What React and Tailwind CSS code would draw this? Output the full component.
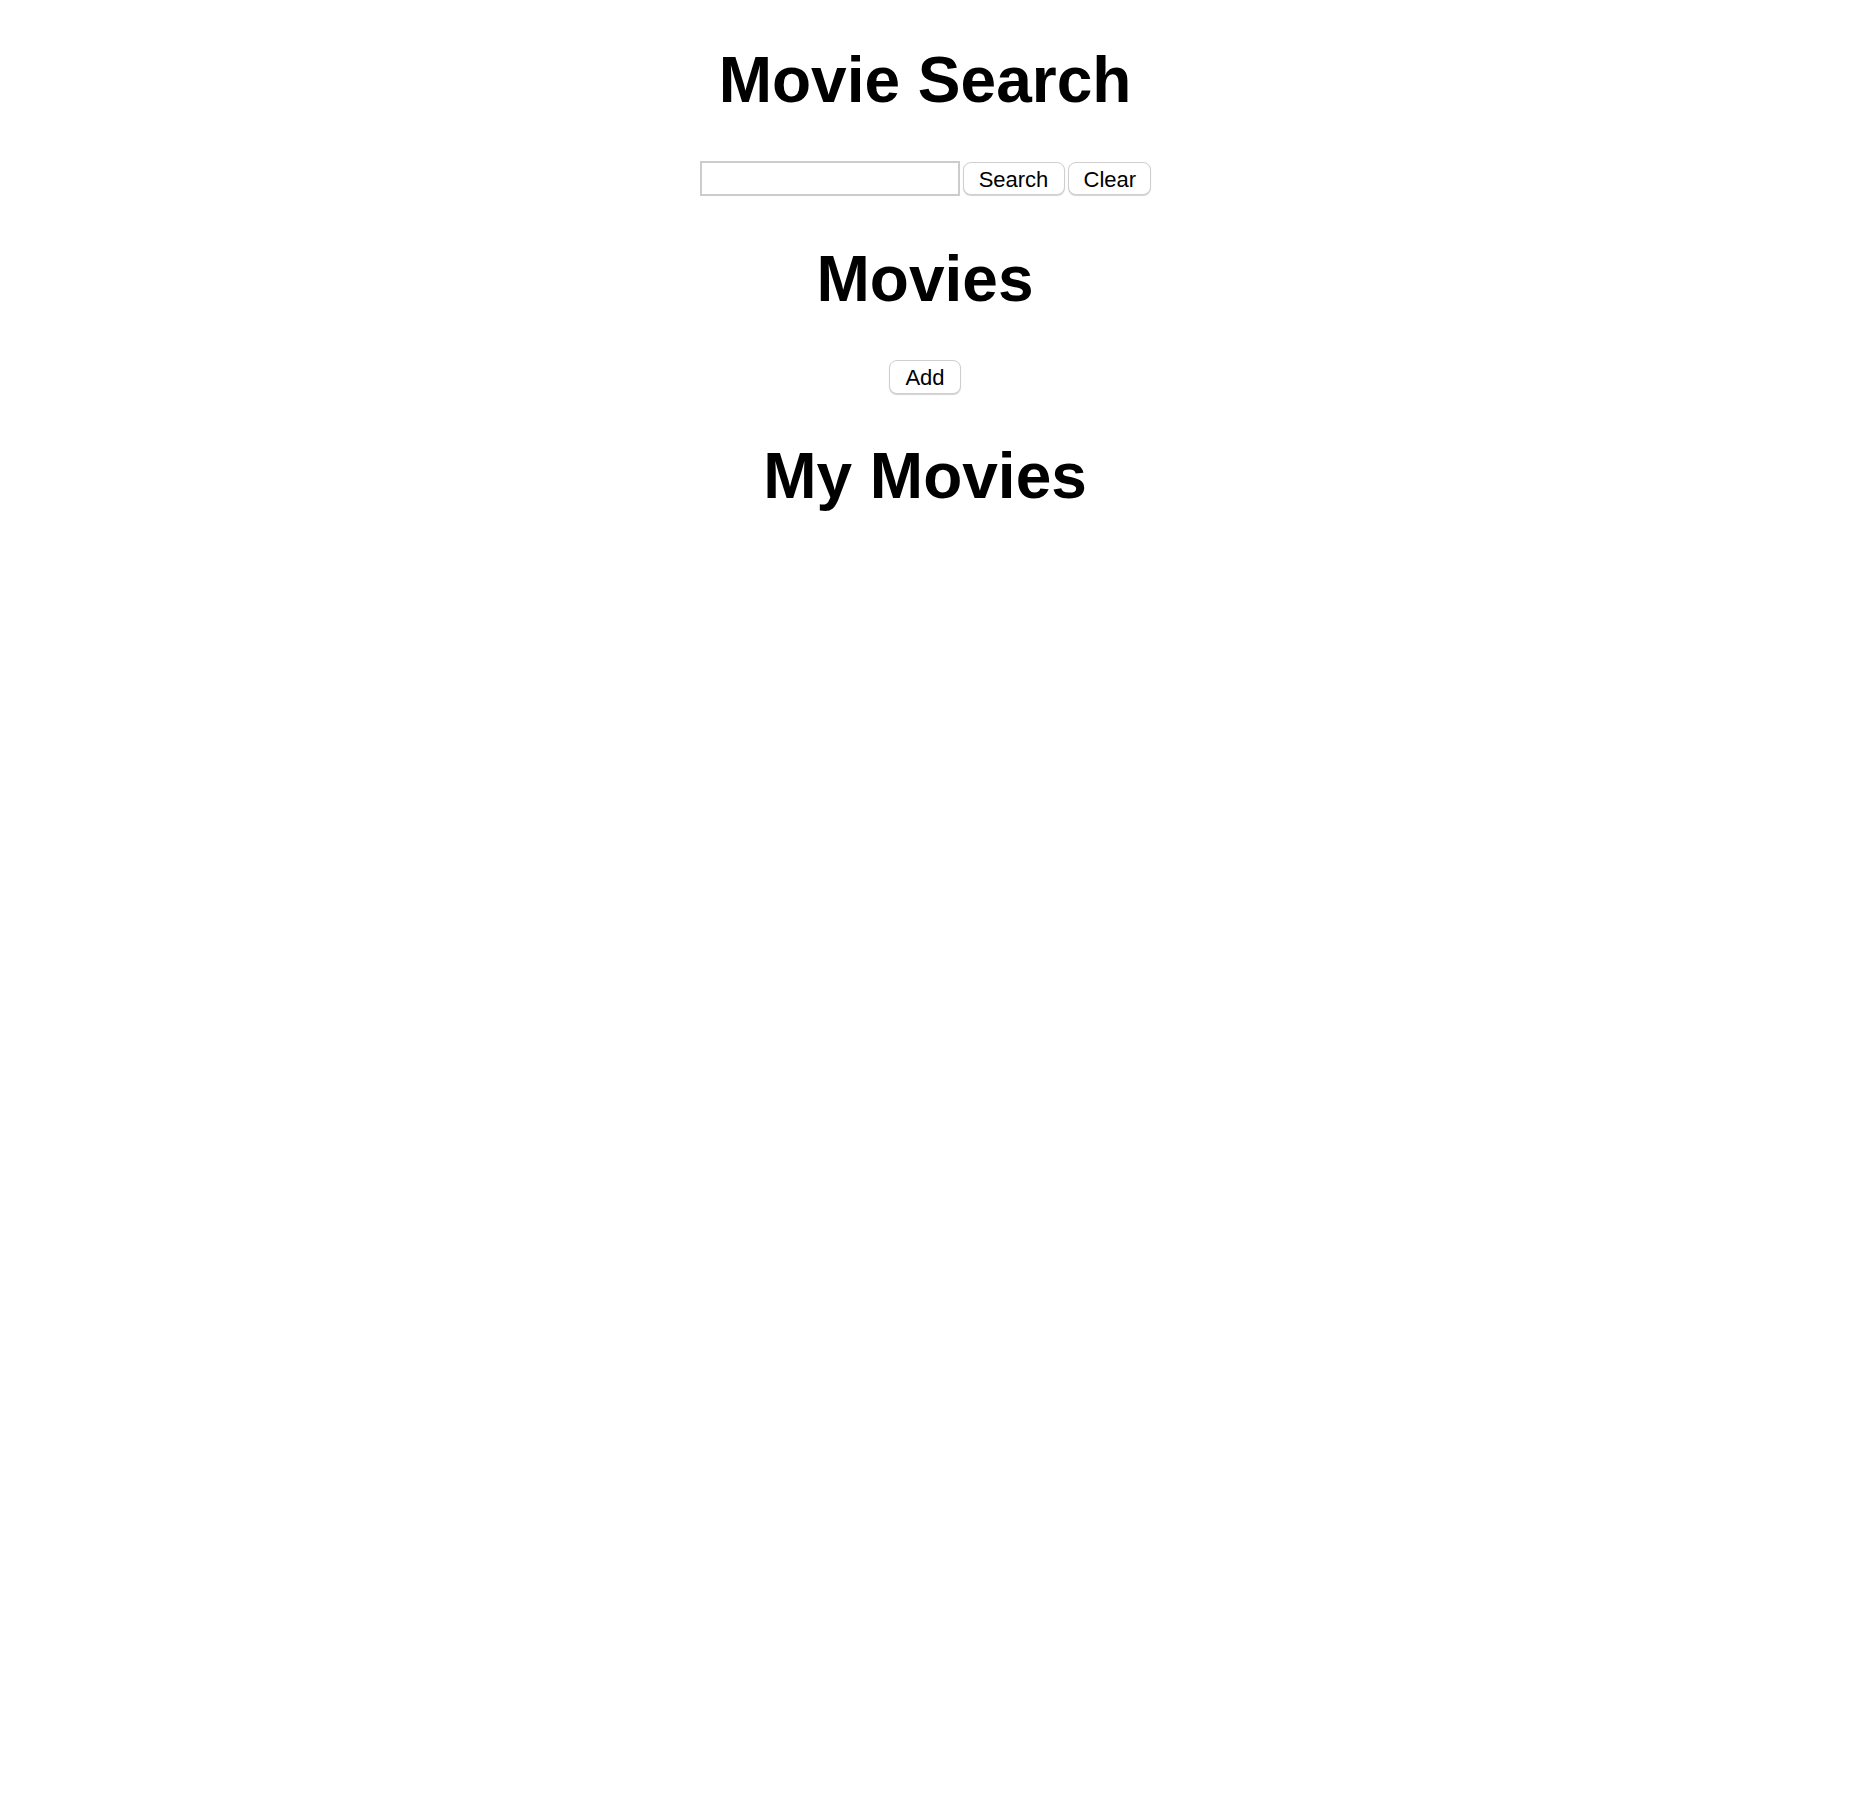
import React from "react";

const font = { fontFamily: '"Liberation Sans", Arial, Helvetica, sans-serif' };

function Btn({ children, className = "" }) {
  return (
    <button
      type="button"
      className={
        "h-[33px] px-[15px] pt-[2px] bg-white text-black text-[22px] leading-none border border-[#cfcfcf] rounded-[8px] shadow-[0_1px_1px_rgba(0,0,0,0.18)] " +
        className
      }
    >
      {children}
    </button>
  );
}

export default function App() {
  return (
    <div
      className="min-h-[1798px] w-full bg-white text-black flex flex-col items-center font-['Liberation_Sans',Arial,sans-serif]"
      style={font}
    >
      <h1 className="mt-[43px] text-[64px] font-bold leading-[74px]">Movie Search</h1>
      <div className="mt-[44px] flex items-center gap-[3px]">
        <input
          type="text"
          className="w-[260px] h-[35px] border-2 border-[#cccccc] bg-white outline-none px-1 text-[22px]"
        />
        <Btn className="w-[102px]">Search</Btn>
        <Btn className="w-[83px]">Clear</Btn>
      </div>
      <h1 className="mt-[46px] text-[64px] font-bold leading-[74px]">Movies</h1>
      <div className="mt-[44px]">
        <Btn className="w-[72px] h-[34px]">Add</Btn>
      </div>
      <h1 className="mt-[45px] text-[64px] font-bold leading-[74px]">My Movies</h1>
    </div>
  );
}
